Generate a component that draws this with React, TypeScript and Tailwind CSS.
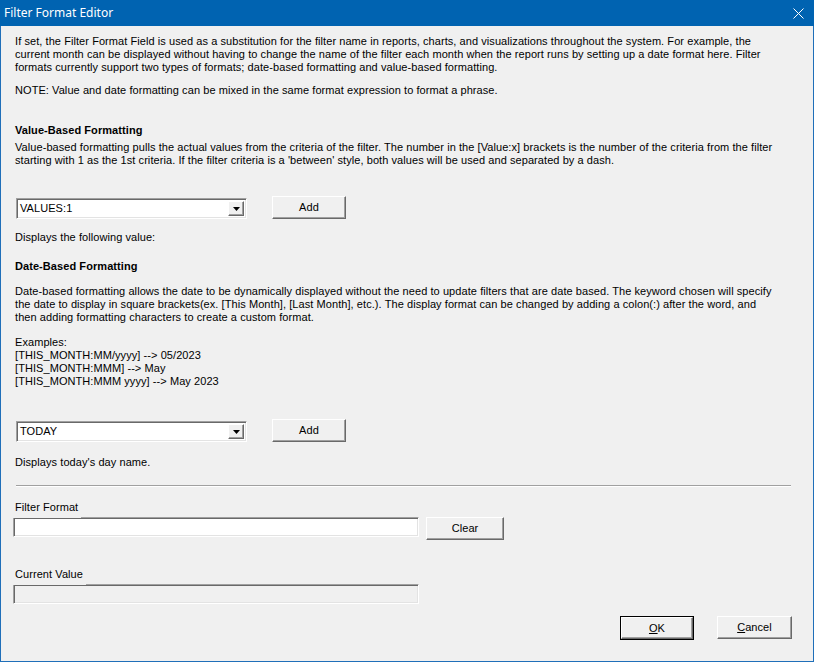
import React from 'react'

const font = { fontFamily: '"Liberation Sans", Arial, sans-serif' }

function Button({ children, isDefault = false, className = '' }: { children: React.ReactNode; isDefault?: boolean; className?: string }) {
  // classic 3D raised button; the default one gets an extra black frame
  return (
    <div className={`${isDefault ? 'border border-black' : ''} ${className}`}>
      <button className="w-full h-full flex items-center justify-center bg-[#f0f0f0] border-t border-l border-t-white border-l-white border-r border-b border-r-[#696969] border-b-[#696969] shadow-[inset_-1px_-1px_0_#a0a0a0] text-[11px] text-black leading-none">
        {children}
      </button>
    </div>
  )
}

function Combo({ value }: { value: string }) {
  return (
    <div className="w-[231px] h-[21px] flex items-stretch bg-white border-t border-l border-t-[#a0a0a0] border-l-[#a0a0a0] border-r border-b border-r-white border-b-white shadow-[inset_1px_1px_0_#696969,inset_-1px_-1px_0_#e3e3e3] p-[2px] pl-[3px]">
      <div className="flex-1 flex items-center text-[11px] text-black">{value}</div>
      <div className="w-[16px] flex items-center justify-center bg-[#f0f0f0] border-t border-l border-t-white border-l-white border-r border-b border-r-[#696969] border-b-[#696969] shadow-[inset_-1px_-1px_0_#a0a0a0]">
        <svg width="7" height="4" viewBox="0 0 7 4">
          <polygon points="0,0 7,0 3.5,4" fill="#000" />
        </svg>
      </div>
    </div>
  )
}

function Field({ label, disabled = false }: { label: string; disabled?: boolean }) {
  return (
    <>
      <div className="relative z-10 w-fit h-[17px] bg-[#f0f0f0] pl-[2px] pr-[3px] text-[11px] leading-[13px] text-black">{label}</div>
      <div className={`mt-[-1px] w-[406px] h-[20px] border-t border-l border-t-[#a0a0a0] border-l-[#a0a0a0] border-r border-b border-r-white border-b-white shadow-[inset_1px_1px_0_#696969,inset_-1px_-1px_0_#e3e3e3] ${disabled ? 'bg-[#f0f0f0]' : 'bg-white'}`} />
    </>
  )
}

export default function App() {
  return (
    <div className="w-[814px] h-[662px] flex flex-col bg-[#f0f0f0] text-black" style={font}>
      {/* Title bar */}
      <div className="h-[26px] bg-[#0063b1] flex items-center justify-between pl-[4px] pr-[10px]">
        <span className="text-white text-[12px]" style={{ fontFamily: '"Noto Sans", "Liberation Sans", sans-serif' }}>Filter Format Editor</span>
        <svg width="11" height="11" viewBox="0 0 11 11">
          <path d="M0.5 0.5 L10.5 10.5 M10.5 0.5 L0.5 10.5" stroke="#fff" strokeWidth="1" />
        </svg>
      </div>

      {/* Body */}
      <div className="flex-1 flex flex-col border-l border-r border-b border-[#1f6fb9] pl-[12px] text-[11px] leading-[13px] tracking-[0.07px]">
        <p className="mt-[9px] pl-[2px]">
          If set, the Filter Format Field is used as a substitution for the filter name in reports, charts, and visualizations throughout the system. For example, the<br />
          current month can be displayed without having to change the name of the filter each month when the report runs by setting up a date format here. Filter<br />
          formats currently support two types of formats; date-based formatting and value-based formatting.
        </p>
        <p className="mt-[10px] pl-[2px]">NOTE: Value and date formatting can be mixed in the same format expression to format a phrase.</p>

        <h2 className="mt-[27px] pl-[2px] font-bold">Value-Based Formatting</h2>
        <p className="mt-[4px] pl-[2px]">
          Value-based formatting pulls the actual values from the criteria of the filter. The number in the [Value:x] brackets is the number of the criteria from the filter<br />
          starting with 1 as the 1st criteria. If the filter criteria is a 'between' style, both values will be used and separated by a dash.
        </p>

        <div className="mt-[29px] flex items-start">
          <div className="ml-[3px] mt-[2px]"><Combo value="VALUES:1" /></div>
          <Button className="ml-[25px] w-[74px] h-[23px]">Add</Button>
        </div>
        <p className="mt-[12px] pl-[2px]">Displays the following value:</p>

        <h2 className="mt-[16px] pl-[2px] font-bold">Date-Based Formatting</h2>
        <p className="mt-[12px] pl-[2px]">
          Date-based formatting allows the date to be dynamically displayed without the need to update filters that are date based. The keyword chosen will specify<br />
          the date to display in square brackets(ex. [This Month], [Last Month], etc.). The display format can be changed by adding a colon(:) after the word, and<br />
          then adding formatting characters to create a custom format.
        </p>
        <p className="mt-[12px] pl-[2px]">
          Examples:<br />
          [THIS_MONTH:MM/yyyy] --&gt; 05/2023<br />
          [THIS_MONTH:MMM] --&gt; May<br />
          [THIS_MONTH:MMM yyyy] --&gt; May 2023
        </p>

        <div className="mt-[31px] flex items-start">
          <div className="ml-[3px] mt-[2px]"><Combo value="TODAY" /></div>
          <Button className="ml-[25px] w-[74px] h-[23px]">Add</Button>
        </div>
        <p className="mt-[14px] pl-[2px]">Displays today's day name.</p>

        <div className="mt-[16px] ml-[3px] mr-[22px] border-t border-[#a0a0a0] border-b border-b-white" />

        <div className="mt-[14px] flex items-start">
          <div className="flex flex-col">
            <Field label="Filter Format" />
          </div>
          <Button className="ml-[7px] mt-[16px] w-[78px] h-[23px]">Clear</Button>
        </div>

        <div className="mt-[28px] flex flex-col">
          <Field label="Current Value" disabled />
        </div>

        <div className="mt-[12px] flex justify-end pr-[21px] gap-[23px]">
          <Button isDefault className="w-[74px] h-[24px]"><span className="underline">O</span>K</Button>
          <Button className="w-[75px] h-[23px]"><span className="underline">C</span>ancel</Button>
        </div>
      </div>
    </div>
  )
}
